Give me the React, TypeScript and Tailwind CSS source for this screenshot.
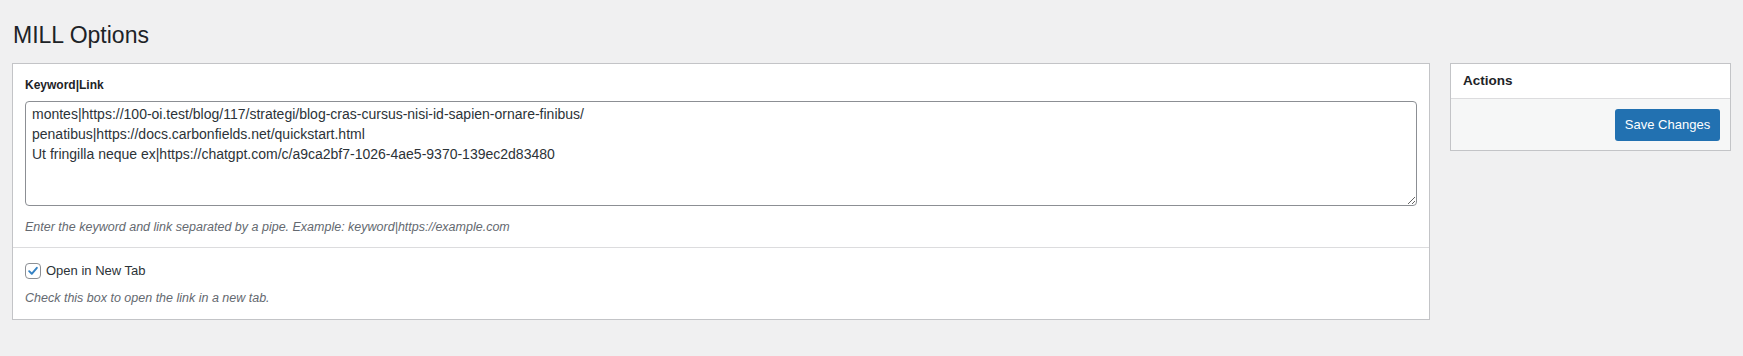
import { useState } from 'react'

const links = `montes|https://100-oi.test/blog/117/strategi/blog-cras-cursus-nisi-id-sapien-ornare-finibus/
penatibus|https://docs.carbonfields.net/quickstart.html
Ut fringilla neque ex|https://chatgpt.com/c/a9ca2bf7-1026-4ae5-9370-139ec2d83480`

const font = "font-['Segoe_UI','Liberation_Sans',sans-serif]"

const App = () => {
    const [newTab, setNewTab] = useState(true)

    return (
        <div className={`min-h-[356px] w-full bg-[#f0f0f1] px-3 text-[#1d2327] ${font}`}>
            <h1 className="pt-5 pl-px text-[23px] leading-[30px] font-normal">MILL Options</h1>

            <div className="mt-[13px] flex items-start gap-5">
                {/* Main settings box */}
                <div className="flex-1 border border-[#c3c4c7] bg-white">
                    <div className="px-3 pt-3 pb-[11px]">
                        <label className="block text-[12px] leading-[18px] font-semibold">Keyword|Link</label>
                        <textarea
                            defaultValue={links}
                            className="mt-[7px] block h-[105px] w-full rounded border border-[#8c8f94] px-1.5 py-0.5 text-[14px] leading-5 text-[#2c3338] outline-none"
                        />
                        <p className="mt-3 text-[12.5px] leading-[18px] italic text-[#646970]">
                            Enter the keyword and link separated by a pipe. Example: keyword|https://example.com
                        </p>
                    </div>

                    <div className="border-t border-[#dcdcde] px-3 pt-[15px] pb-3">
                        <label className="flex h-4 items-center gap-[5px] text-[13px] leading-4 text-[#2c3338]">
                            <button
                                type="button"
                                onClick={() => setNewTab(!newTab)}
                                className="flex h-4 w-4 items-center justify-center rounded border border-[#8c8f94] bg-white"
                            >
                                {newTab && (
                                    <svg viewBox="0 0 16 16" className="h-4 w-4">
                                        <path d="M3.6 8.2 L6.6 11.2 L12.4 4.4" fill="none" stroke="#3582c4" strokeWidth="2.2" strokeLinecap="round" strokeLinejoin="round" />
                                    </svg>
                                )}
                            </button>
                            Open in New Tab
                        </label>
                        <p className="mt-2.5 text-[12.5px] leading-[18px] italic text-[#646970]">
                            Check this box to open the link in a new tab.
                        </p>
                    </div>
                </div>

                {/* Actions sidebar */}
                <div className="w-[281px] border border-[#c3c4c7] bg-white">
                    <div className="flex h-[35px] items-center border-b border-[#dcdcde] px-3">
                        <h2 className="text-[13.5px] font-semibold">Actions</h2>
                    </div>
                    <div className="flex justify-end bg-[#f6f7f7] px-2.5 pt-2.5 pb-[9px]">
                        <button className="h-8 w-[105px] rounded-[3px] bg-[#2271b1] text-[13px] text-white hover:bg-[#135e96]">
                            Save Changes
                        </button>
                    </div>
                </div>
            </div>
        </div>
    )
}

export default App
